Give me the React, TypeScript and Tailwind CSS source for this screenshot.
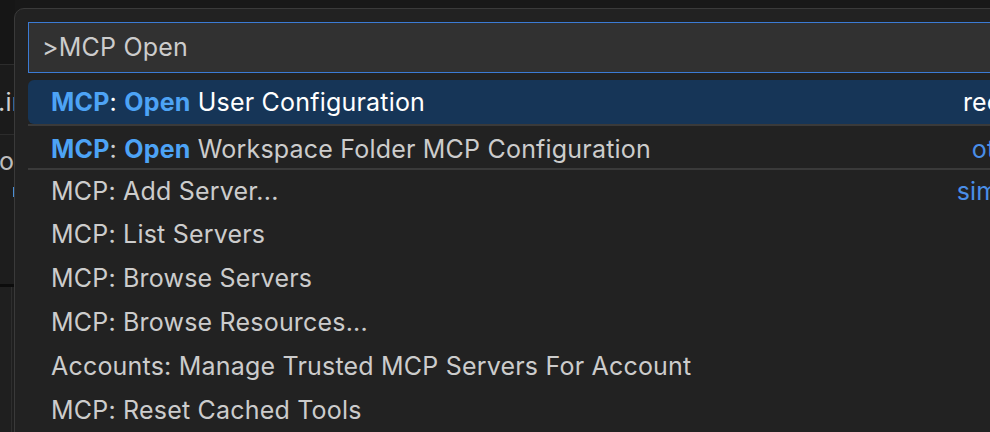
import React from "react";

const font = { fontFamily: "Inter, 'Noto Sans', sans-serif" };

type Row = {
  label: React.ReactNode;
  right?: string;
  rightTone?: "white" | "blue";
  selected?: boolean;
  rowClass: string;
};

function Hl({ children }: { children: React.ReactNode }) {
  return <span className="font-bold text-[#4da3f5]">{children}</span>;
}

// heights tuned so each label sits where the original quick pick puts it
const rows: Row[] = [
  {
    label: (
      <>
        <Hl>MCP</Hl>: <Hl>Open</Hl> User Configuration
      </>
    ),
    right: "recently used",
    rightTone: "white",
    selected: true,
    rowClass: "h-[44px] pt-[1px]",
  },
  {
    label: (
      <>
        <Hl>MCP</Hl>: <Hl>Open</Hl> Workspace Folder MCP Configuration
      </>
    ),
    right: "other commands",
    rightTone: "blue",
    rowClass: "h-[44px] border-t-2 border-[#3a3a3a] pt-[6px]",
  },
  {
    label: "MCP: Add Server...",
    right: "similar commands",
    rightTone: "blue",
    rowClass: "h-[44px] border-t-2 border-[#3a3a3a] pt-[2px]",
  },
  { label: "MCP: List Servers", rowClass: "h-[44px] pt-[2px]" },
  { label: "MCP: Browse Servers", rowClass: "h-[44px] pt-[2px]" },
  { label: "MCP: Browse Resources...", rowClass: "h-[44px] pt-[2px]" },
  {
    label: "Accounts: Manage Trusted MCP Servers For Account",
    rowClass: "h-[44px] pt-[2px]",
  },
  { label: "MCP: Reset Cached Tools", rowClass: "h-[44px] pt-[2px]" },
];

export default function App() {
  return (
    <div
      className="relative w-[990px] h-[432px] overflow-hidden bg-[#181818] text-[#cccccc] text-[25px] tracking-[0.2px]"
      style={font}
    >
      {/* editor behind the palette */}
      <div className="flex flex-col h-full w-[15px]">
        <div className="h-[65px] bg-[#161616] border-b border-[#2c2c2c]" />
        <div className="relative h-[70px] bg-[#1b1b1b] border-b border-[#2c2c2c]">
          <span className="absolute left-[-2px] top-[19px] whitespace-nowrap text-[#d0d0d0]">
            .in
          </span>
        </div>
        <div className="relative h-[152px] bg-[#1d1d1d] border-b-[3px] border-[#0c0c0c]">
          <span className="absolute left-[-1px] top-[8px] text-[#bdbdbd]">o</span>
          <span className="absolute left-[13px] top-[52px] w-[1px] h-[10px] bg-[#4a8fd6]" />
        </div>
        <div className="flex-1 bg-[#1f1f1f] flex">
          <div className="w-[11px]" />
          <div className="w-[1px] bg-[#2e2e2e]" />
        </div>
      </div>

      {/* command palette */}
      <div className="absolute left-[14px] top-[8px] w-[1200px] h-[500px] rounded-tl-[10px] border border-[#3a3a3a] bg-[#222222] pt-[13px] pl-[13px]">
        <div className="w-[1160px] h-[51px] border-[1.5px] border-[#3b7bd4] bg-[#313131] flex items-center pl-[13px] text-[#cccccc]">
          &gt;MCP Open
        </div>
        <div className="mt-[7px] w-[1160px]">
          {rows.map((r, i) => (
            <div
              key={i}
              className={
                "flex items-center pl-[23px] whitespace-nowrap " +
                r.rowClass +
                (r.selected
                  ? " bg-[#163557] text-white rounded-l-[6px] pr-[62px]"
                  : " pr-[14px]")
              }
            >
              <span className="flex-1">{r.label}</span>
              {r.right && (
                <span
                  className={
                    r.rightTone === "white" ? "text-white" : "text-[#4a8ee8]"
                  }
                >
                  {r.right}
                </span>
              )}
            </div>
          ))}
        </div>
      </div>
    </div>
  );
}
